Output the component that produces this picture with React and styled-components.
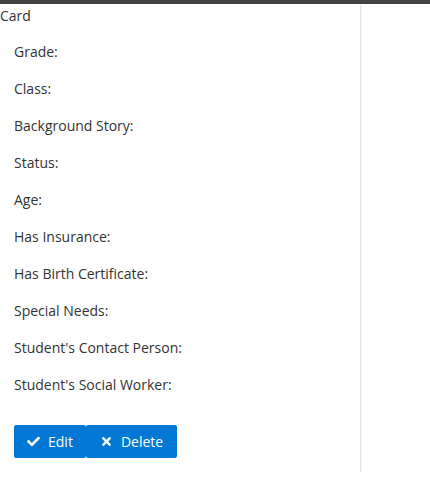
import React from 'react';
import styled, { createGlobalStyle } from 'styled-components';
import { FaCheck, FaTimes } from 'react-icons/fa';

const GlobalStyle = createGlobalStyle`
  body {
    margin: 0;
    background: #fefefe;
    font-family: "Open Sans", "Liberation Sans", sans-serif;
    color: #333;
  }
`;

const TopBar = styled.div`
  height: 4px;
  background: #444;
`;

const CardBox = styled.div`
  width: 360px;
  background: #fff;
  box-shadow: 0 1px 2px rgba(0, 0, 0, 0.35);
  padding-bottom: 14px;
`;

const CardTitle = styled.div`
  font-size: 14px;
  line-height: 24px;
  color: #333;
`;

const FieldList = styled.div`
  display: flex;
  flex-direction: column;
  gap: 18px;
  padding: 14px 14px 0;
`;

const Field = styled.div`
  font-size: 14px;
  line-height: 19px;
  color: #333;
`;

const Actions = styled.div`
  display: flex;
  padding: 31px 14px 0;
`;

const ActionButton = styled.button`
  display: flex;
  align-items: center;
  gap: 8px;
  height: 33px;
  padding: 0 ${p => p.$pad}px;
  border: none;
  border-radius: 2px;
  background: #0078d4;
  color: #fff;
  font-family: "Open Sans", "Liberation Sans", sans-serif;
  font-size: 14px;
  cursor: pointer;
  svg { font-size: 13px; }
`;

const fields = [
  'Grade:',
  'Class:',
  'Background Story:',
  'Status:',
  'Age:',
  'Has Insurance:',
  'Has Birth Certificate:',
  'Special Needs:',
  "Student's Contact Person:",
  "Student's Social Worker:",
];

export default function App() {
  return (
    <>
      <GlobalStyle />
      <TopBar />
      <CardBox>
        <CardTitle>Card</CardTitle>
        <FieldList>
          {fields.map(f => <Field key={f}>{f}</Field>)}
        </FieldList>
        <Actions>
          <ActionButton $pad={13}><FaCheck />Edit</ActionButton>
          <ActionButton $pad={14}><FaTimes />Delete</ActionButton>
        </Actions>
      </CardBox>
    </>
  );
}
